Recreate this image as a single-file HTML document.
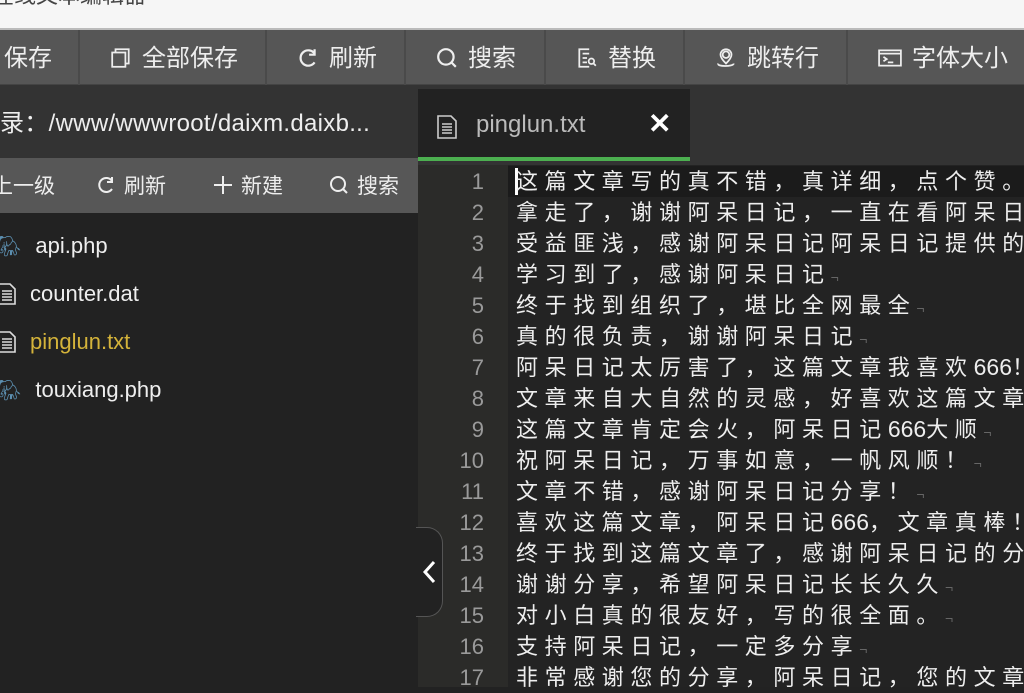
<!DOCTYPE html>
<html><head><meta charset="utf-8"><style>
*{margin:0;padding:0;box-sizing:border-box}
body{width:1024px;height:687px;overflow:hidden;background:#222;font-family:"Liberation Sans","Noto Sans CJK SC",sans-serif;position:relative;color:#eee}
.abs{position:absolute}
#top{left:0;top:0;width:1024px;height:30px;background:#f6f6f6;border-bottom:2px solid #bbb;overflow:hidden}
#top span{position:absolute;left:-8px;top:-22px;font-size:22px;color:#444}
#tb{left:0;top:30px;width:1024px;height:55px;background:#565656;border-bottom:1px solid #444}
.btn{position:absolute;top:0;height:55px;line-height:57px;font-size:24px;color:#eee;white-space:nowrap;border-right:2px solid #4a4a4a}
.btn svg{vertical-align:-3px;margin-right:10px}
#path{left:0;top:85px;width:418px;height:73px;background:#333;font-size:24px;line-height:78px;white-space:nowrap;overflow:hidden;letter-spacing:0.3px}
#ltb{left:0;top:158px;width:418px;height:55px;background:#575757;font-size:21px;line-height:57px}
#ltb span{position:absolute;white-space:nowrap}
#files{left:0;top:213px;width:418px;height:474px;background:#222}
.f{position:absolute;font-size:22px;white-space:nowrap}
#tabbar{left:418px;top:85px;width:606px;height:80px;background:#333}
#tab{left:418px;top:89px;width:272px;height:72px;background:#222;border-bottom:4px solid #4caf50}
#gut{left:418px;top:165px;width:90px;height:522px;background:#2b2b29}
#ed{left:508px;top:165px;width:516px;height:522px;background:#232323}
.ln{position:absolute;left:418px;width:66px;text-align:right;font-family:"Liberation Sans",sans-serif;font-size:22px;color:#9a9a9a;height:31px;line-height:31px}
.tx{position:absolute;left:516px;font-size:22px;letter-spacing:6.6px;color:#eee;white-space:nowrap;height:31px;line-height:31px;font-family:"Liberation Sans","Noto Sans CJK SC",sans-serif}
.tx b{font-weight:normal;letter-spacing:0;font-size:23px}
.tx i{font-style:normal;color:#666;font-size:14px;letter-spacing:0}
</style></head><body>
<div id="top" class="abs"><span>在线文本编辑器</span></div>
<div id="tb" class="abs">
<div class="btn" style="left:0;width:80px;padding-left:4px">保存</div>
<div class="btn" style="left:80px;width:187px;padding-left:30px"><svg width="22" height="22" viewBox="0 0 20 20" fill="none" stroke="#eee" stroke-width="1.6"><rect x="2" y="5" width="12" height="13"/><path d="M5 5V2h12v13h-3"/></svg>全部保存</div>
<div class="btn" style="left:267px;width:139px;padding-left:30px"><svg width="22" height="22" viewBox="0 0 20 20" fill="none" stroke="#eee" stroke-width="2"><path d="M16 6A7 7 0 1 0 16 14"/><path d="M16 2v5h-5"/></svg>刷新</div>
<div class="btn" style="left:406px;width:140px;padding-left:30px"><svg width="22" height="22" viewBox="0 0 20 20" fill="none" stroke="#eee" stroke-width="2"><circle cx="9" cy="9" r="7"/><path d="M14 14l4 4"/></svg>搜索</div>
<div class="btn" style="left:546px;width:139px;padding-left:30px"><svg width="22" height="22" viewBox="0 0 20 20" fill="none" stroke="#eee" stroke-width="1.6"><path d="M12 2H3v16h9M6 6h6M6 10h4M6 14h4"/><circle cx="14" cy="13" r="2.5"/><path d="M16 15l2 2"/></svg>替换</div>
<div class="btn" style="left:685px;width:163px;padding-left:30px"><svg width="22" height="22" viewBox="0 0 20 20" fill="none" stroke="#eee" stroke-width="1.6"><circle cx="10" cy="7" r="3"/><path d="M10 15C6 11 5 9 5 7a5 5 0 0 1 10 0c0 2-1 4-5 8zM3 15c-2 3 14 3 14 0"/></svg>跳转行</div>
<div class="btn" style="left:848px;width:176px;padding-left:30px;border:none"><svg width="24" height="22" viewBox="0 0 22 20" fill="none" stroke="#eee" stroke-width="1.6"><rect x="1" y="3" width="20" height="14"/><path d="M1 6h20M5 9l3 2-3 2M9 14h5"/></svg>字体大小</div>
</div>
<div id="path" class="abs">录：/www/wwwroot/daixm.daixb...</div>
<div id="ltb" class="abs">
<span style="left:-8px">上一级</span>
<span style="left:96px"><svg width="20" height="20" viewBox="0 0 20 20" fill="none" stroke="#eee" stroke-width="2" style="vertical-align:-2px;margin-right:8px"><path d="M16 6A7 7 0 1 0 16 14"/><path d="M16 2v5h-5"/></svg>刷新</span>
<span style="left:213px"><svg width="20" height="20" viewBox="0 0 20 20" stroke="#eee" stroke-width="2" style="vertical-align:-2px;margin-right:8px"><path d="M10 1v18M1 10h18"/></svg>新建</span>
<span style="left:329px"><svg width="20" height="20" viewBox="0 0 20 20" fill="none" stroke="#eee" stroke-width="2" style="vertical-align:-2px;margin-right:8px"><circle cx="9" cy="9" r="7"/><path d="M14 14l4 4"/></svg>搜索</span>
</div>
<div id="files" class="abs">
<div class="f" style="left:-4px;top:20px"><span style="color:#5c8fb0;font-size:20px;margin-right:14px">🐘︎</span>api.php</div>
<div class="f" style="left:0;top:68px"><svg width="18" height="22" viewBox="0 0 18 22" fill="none" stroke="#ddd" stroke-width="1.6" style="vertical-align:-4px;margin-right:14px;margin-left:-2px"><path d="M1 1h11l5 5v15H1zM4 8h10M4 11h10M4 14h10M4 17h10"/></svg>counter.dat</div>
<div class="f" style="left:0;top:116px;color:#d4b33a"><svg width="18" height="22" viewBox="0 0 18 22" fill="none" stroke="#ddd" stroke-width="1.6" style="vertical-align:-4px;margin-right:14px;margin-left:-2px"><path d="M1 1h11l5 5v15H1zM4 8h10M4 11h10M4 14h10M4 17h10"/></svg>pinglun.txt</div>
<div class="f" style="left:-4px;top:164px"><span style="color:#5c8fb0;font-size:20px;margin-right:14px">🐘︎</span>touxiang.php</div>
</div>
<div id="tabbar" class="abs"></div>
<div id="tab" class="abs">
<svg class="abs" style="left:18px;top:26px" width="22" height="24" viewBox="0 0 22 24" fill="none" stroke="#ccc" stroke-width="1.6"><path d="M2 1h13l5 5v17H2zM6 9h10M6 12h10M6 15h10M6 18h10"/></svg>
<span class="abs" style="left:58px;top:22px;font-size:24px;color:#bbb">pinglun.txt</span>
<span class="abs" style="left:230px;top:18px;font-size:28px;color:#fff;font-weight:bold">✕</span>
</div>
<div id="gut" class="abs"></div>
<div id="ed" class="abs"></div>
<div class="abs" style="left:508px;top:166px;width:516px;height:31px;background:#1b1b1b"></div>
<div class="abs" style="left:515px;top:168px;width:3px;height:27px;background:#fff"></div>
<div class="ln" style="top:166px">1</div><div class="tx" style="top:166px">这篇文章写的真不错，真详细，点个赞。</div>
<div class="ln" style="top:197px">2</div><div class="tx" style="top:197px">拿走了，谢谢阿呆日记，一直在看阿呆日</div>
<div class="ln" style="top:228px">3</div><div class="tx" style="top:228px">受益匪浅，感谢阿呆日记阿呆日记提供的</div>
<div class="ln" style="top:259px">4</div><div class="tx" style="top:259px">学习到了，感谢阿呆日记<i>¬</i></div>
<div class="ln" style="top:290px">5</div><div class="tx" style="top:290px">终于找到组织了，堪比全网最全<i>¬</i></div>
<div class="ln" style="top:321px">6</div><div class="tx" style="top:321px">真的很负责，谢谢阿呆日记<i>¬</i></div>
<div class="ln" style="top:352px">7</div><div class="tx" style="top:352px">阿呆日记太厉害了，这篇文章我喜欢<b>666</b>！</div>
<div class="ln" style="top:383px">8</div><div class="tx" style="top:383px">文章来自大自然的灵感，好喜欢这篇文章</div>
<div class="ln" style="top:414px">9</div><div class="tx" style="top:414px">这篇文章肯定会火，阿呆日记<b>666</b>大顺<i>¬</i></div>
<div class="ln" style="top:445px">10</div><div class="tx" style="top:445px">祝阿呆日记，万事如意，一帆风顺！<i>¬</i></div>
<div class="ln" style="top:476px">11</div><div class="tx" style="top:476px">文章不错，感谢阿呆日记分享！<i>¬</i></div>
<div class="ln" style="top:507px">12</div><div class="tx" style="top:507px">喜欢这篇文章，阿呆日记<b>666</b>，文章真棒！</div>
<div class="ln" style="top:538px">13</div><div class="tx" style="top:538px">终于找到这篇文章了，感谢阿呆日记的分</div>
<div class="ln" style="top:569px">14</div><div class="tx" style="top:569px">谢谢分享，希望阿呆日记长长久久<i>¬</i></div>
<div class="ln" style="top:600px">15</div><div class="tx" style="top:600px">对小白真的很友好，写的很全面。<i>¬</i></div>
<div class="ln" style="top:631px">16</div><div class="tx" style="top:631px">支持阿呆日记，一定多分享<i>¬</i></div>
<div class="ln" style="top:662px">17</div><div class="tx" style="top:662px">非常感谢您的分享，阿呆日记，您的文章</div>
<div class="abs" style="left:416px;top:527px;width:27px;height:90px;background:#222;border:1px solid #555;border-left:none;border-radius:0 16px 16px 0"></div>
<svg class="abs" style="left:421px;top:560px" width="16" height="24" viewBox="0 0 16 24" fill="none" stroke="#fff" stroke-width="3"><path d="M13 2L4 12l9 10"/></svg>
</body></html>
